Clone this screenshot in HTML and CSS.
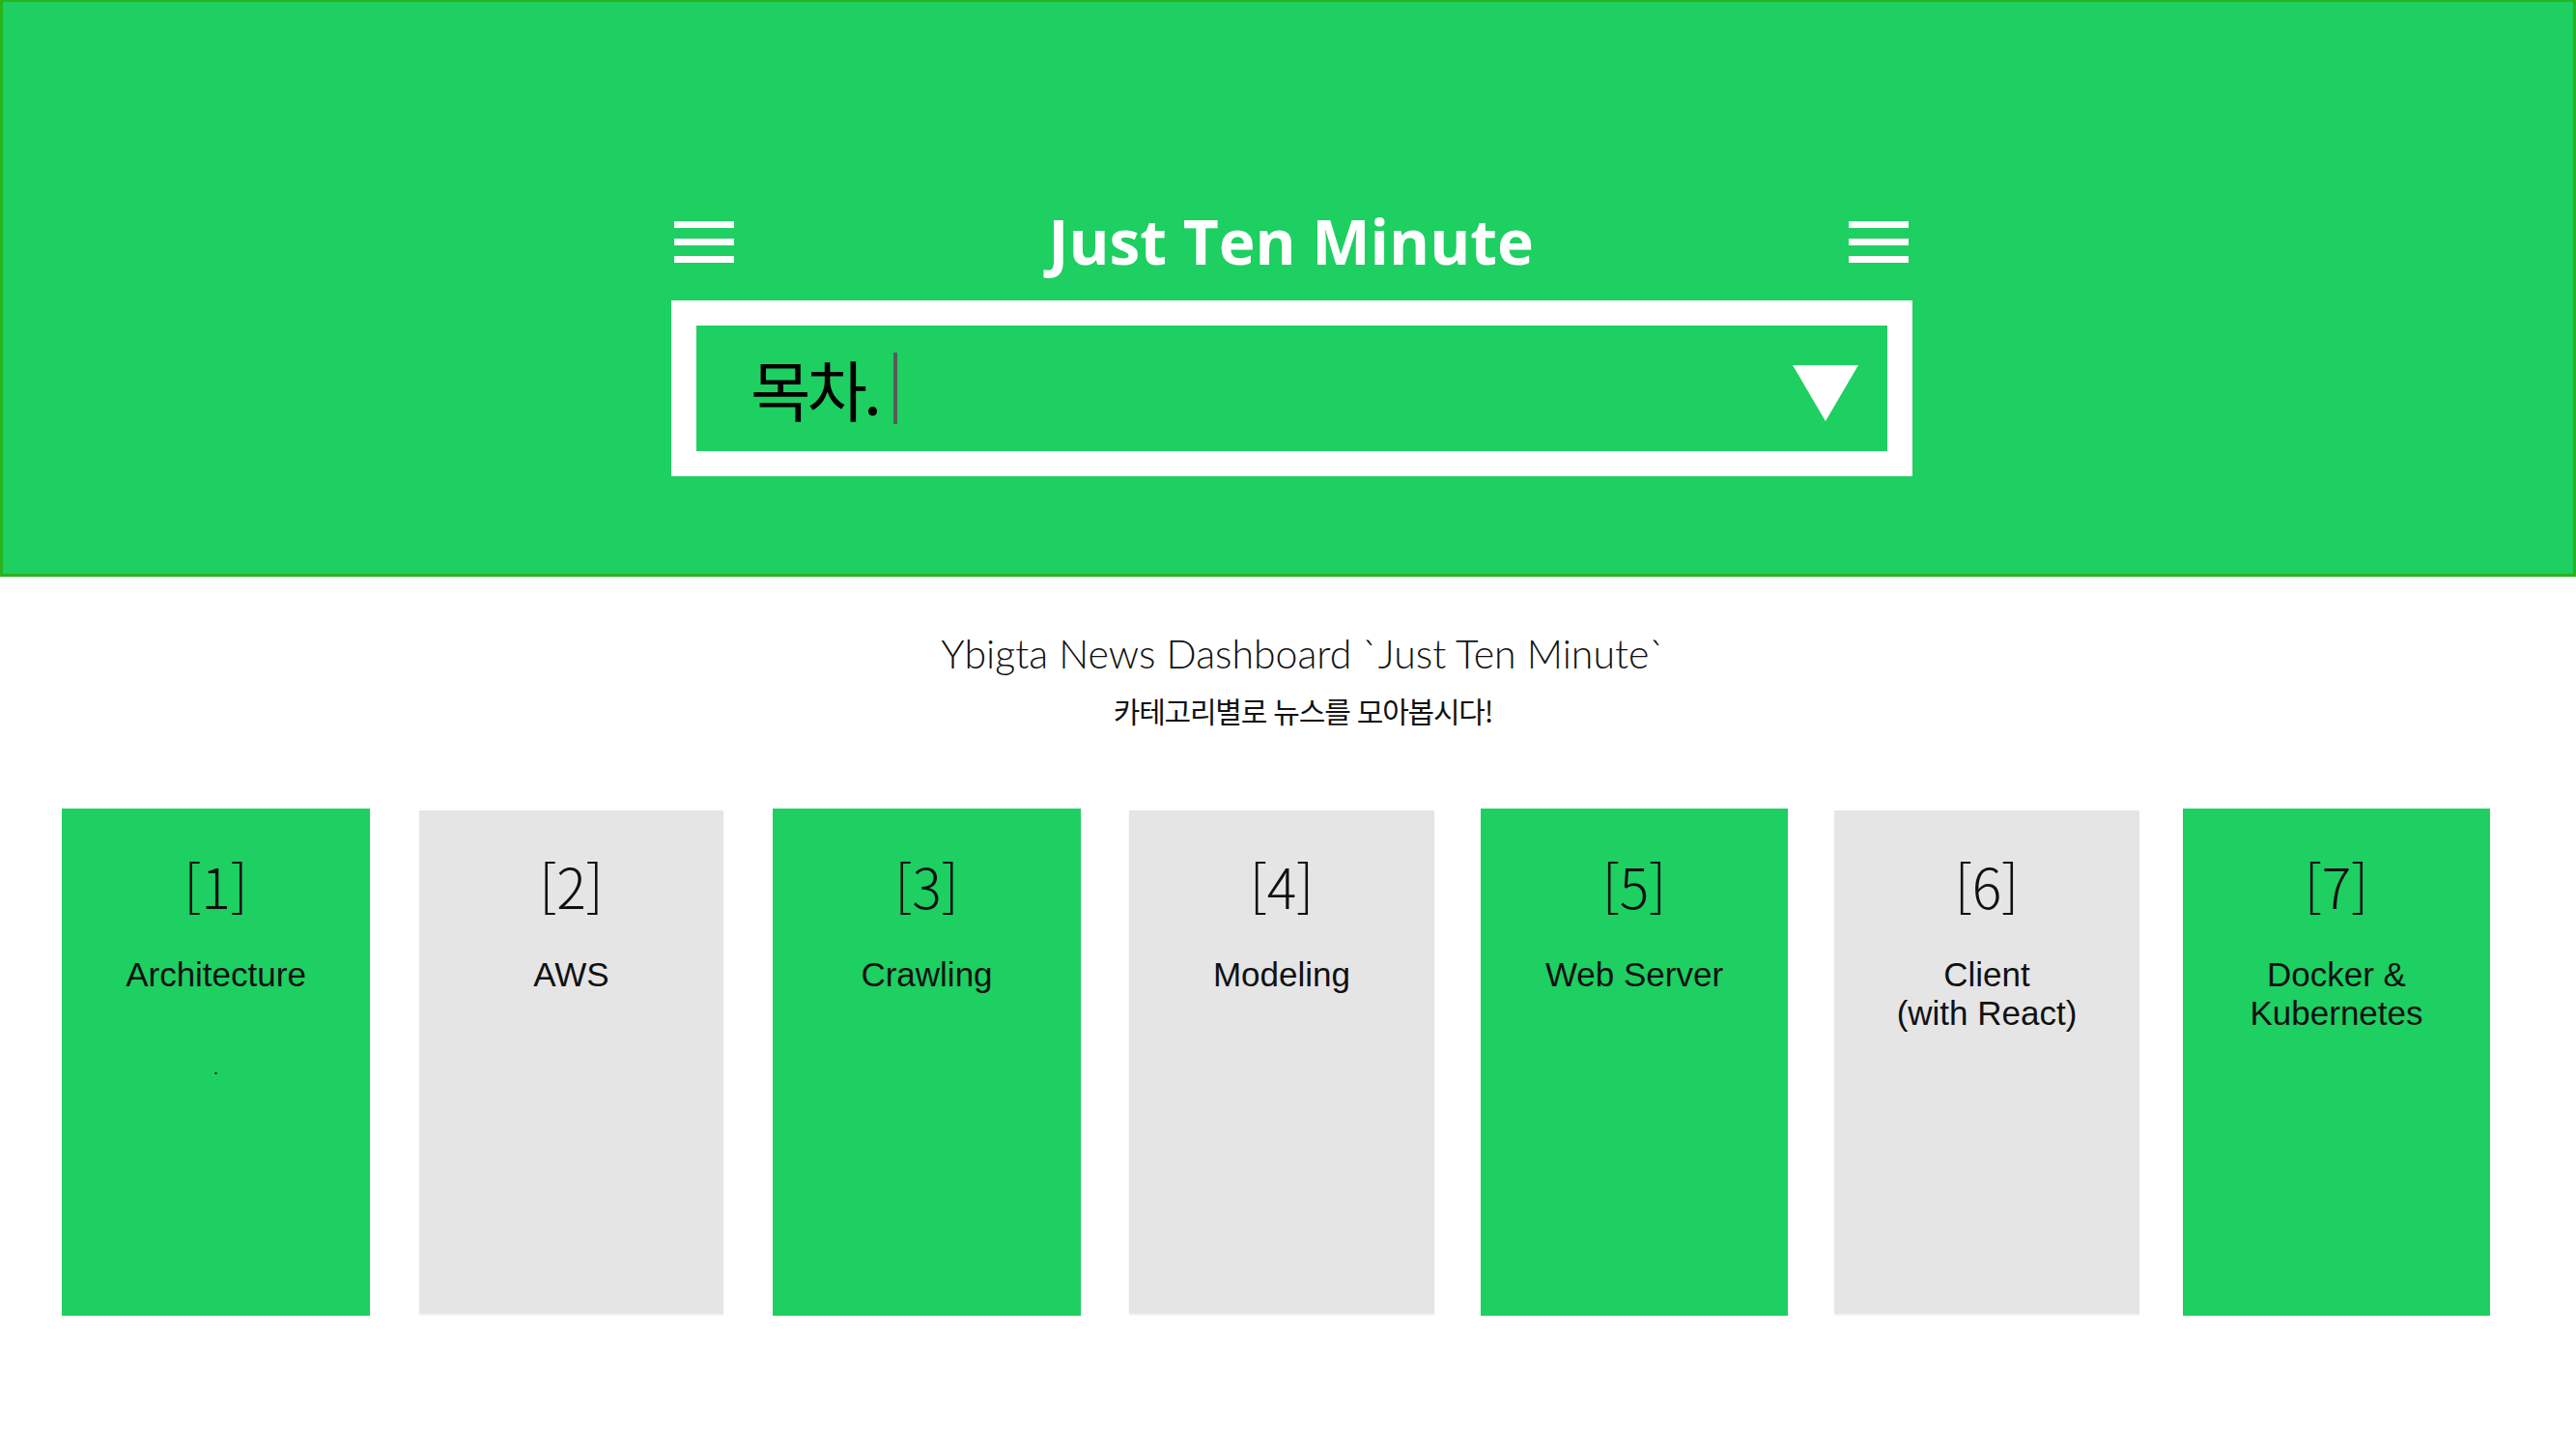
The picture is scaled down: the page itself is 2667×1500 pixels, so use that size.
FILE: index.html
```html
<!DOCTYPE html>
<html lang="ko">
<head>
<meta charset="utf-8">
<title>Just Ten Minute</title>
<link rel="stylesheet" href="styles.css">
</head>
<body>
<header class="header">
  <div class="top-row">
    <div class="burger"><span></span><span></span><span></span></div>
    <h1 class="title">Just Ten Minute</h1>
    <div class="burger"><span></span><span></span><span></span></div>
  </div>
  <div class="select-box">
    <div class="select-inner">
      <span class="select-text">목차.</span>
      <span class="caret"></span>
      <span class="spacer"></span>
      <svg class="arrow" viewBox="0 0 68 58" width="68" height="58"><polygon points="0,0 68,0 34,58" fill="#ffffff"/></svg>
    </div>
  </div>
</header>
<section class="intro">
  <p class="intro-title">Ybigta News Dashboard `Just Ten Minute`</p>
  <p class="intro-sub">카테고리별로 뉴스를 모아봅시다!</p>
</section>
<section class="cards">
  <div class="card green"><div class="num">[1]</div><div class="label"><span>Architecture</span></div><div class="dot">.</div></div>
  <div class="card gray"><div class="num">[2]</div><div class="label"><span>AWS</span></div></div>
  <div class="card green"><div class="num">[3]</div><div class="label"><span>Crawling</span></div></div>
  <div class="card gray"><div class="num">[4]</div><div class="label"><span>Modeling</span></div></div>
  <div class="card green"><div class="num">[5]</div><div class="label"><span>Web Server</span></div></div>
  <div class="card gray"><div class="num">[6]</div><div class="label"><span>Client</span><span>(with React)</span></div></div>
  <div class="card green"><div class="num">[7]</div><div class="label"><span>Docker &amp;</span><span>Kubernetes</span></div></div>
</section>
</body>
</html>
```
FILE: styles.css
```css
* { box-sizing: border-box; }
html, body { margin: 0; padding: 0; background: #ffffff; }
body {
  font-family: "Noto Sans CJK KR", "Noto Sans", sans-serif;
  color: #111111;
  width: 2667px;
}
.header {
  height: 597px;
  background: #1ecf62;
  border: 3px solid #27b41c;
  border-top-width: 2px;
  display: flex;
  flex-direction: column;
  align-items: center;
  padding-top: 217px;
}
.top-row {
  width: 1278px;
  height: 62px;
  display: flex;
  align-items: center;
  justify-content: space-between;
  margin-left: 6px;
}
.burger {
  width: 62px;
  display: flex;
  flex-direction: column;
  gap: 11px;
}
.burger span {
  display: block;
  height: 7px;
  background: #ffffff;
}
.title {
  margin: 0;
  font-family: "Open Sans", sans-serif;
  font-weight: 700;
  font-size: 64px;
  line-height: 62px;
  color: #ffffff;
  letter-spacing: 0;
}
.select-box {
  margin-top: 30px;
  width: 1285px;
  height: 182px;
  border: 26px solid #ffffff;
  margin-left: 8px;
}
.select-inner {
  height: 100%;
  background: #1ecf62;
  display: flex;
  align-items: center;
  padding: 0 30px 0 56px;
}
.select-text {
  font-size: 68px;
  font-weight: 400;
  color: #000000;
  line-height: 1;
  letter-spacing: -4px;
}
.caret {
  width: 4px;
  height: 74px;
  background: #5a5a5a;
  margin-left: 16px;
}
.spacer { flex: 1; }
.arrow { display: block; margin-top: 10px; }
.intro {
  text-align: center;
  padding-top: 50px;
  padding-left: 31px;
}
.intro p { margin: 0; }
.intro-title {
  font-family: "Lato", sans-serif;
  font-size: 41px;
  font-weight: 300;
  line-height: 60px;
  color: #111111;
}
.intro-sub {
  font-size: 30px;
  font-weight: 400;
  line-height: 44px;
  letter-spacing: -1.2px;
  margin-top: 6px !important;
}
.cards {
  display: flex;
  align-items: center;
  padding-left: 64px;
  margin-top: 80px;
}
.card {
  height: 525px;
  flex: none;
  display: flex;
  flex-direction: column;
  align-items: center;
  text-align: center;
  padding-top: 44px;
}
.card.green { background: #1ecf62; width: 319px; }
.card.gray {
  background: #e5e5e5;
  width: 316px;
  height: 521px;
  padding-top: 42px;
  box-shadow: 0 2px 2px rgba(0,0,0,0.06);
}
.card:nth-child(2) { margin-left: 51px; width: 315px; }
.card:nth-child(3) { margin-left: 51px; }
.card:nth-child(4) { margin-left: 50px; }
.card:nth-child(5) { margin-left: 48px; width: 318px; }
.card:nth-child(6) { margin-left: 48px; }
.card:nth-child(7) { margin-left: 45px; width: 318px; }
.num {
  font-size: 57px;
  font-weight: 300;
  line-height: 70px;
  color: #111111;
}
.label {
  margin-top: 38px;
  font-family: "Liberation Sans", Arial, sans-serif;
  font-size: 35px;
  color: #111111;
  display: flex;
  flex-direction: column;
  align-items: center;
}
.label span {
  display: block;
  height: 40px;
  line-height: 40px;
}
.dot {
  margin-top: 68px;
  font-family: "Liberation Sans", Arial, sans-serif;
  font-size: 18px;
  line-height: 18px;
  color: #111111;
}
```
